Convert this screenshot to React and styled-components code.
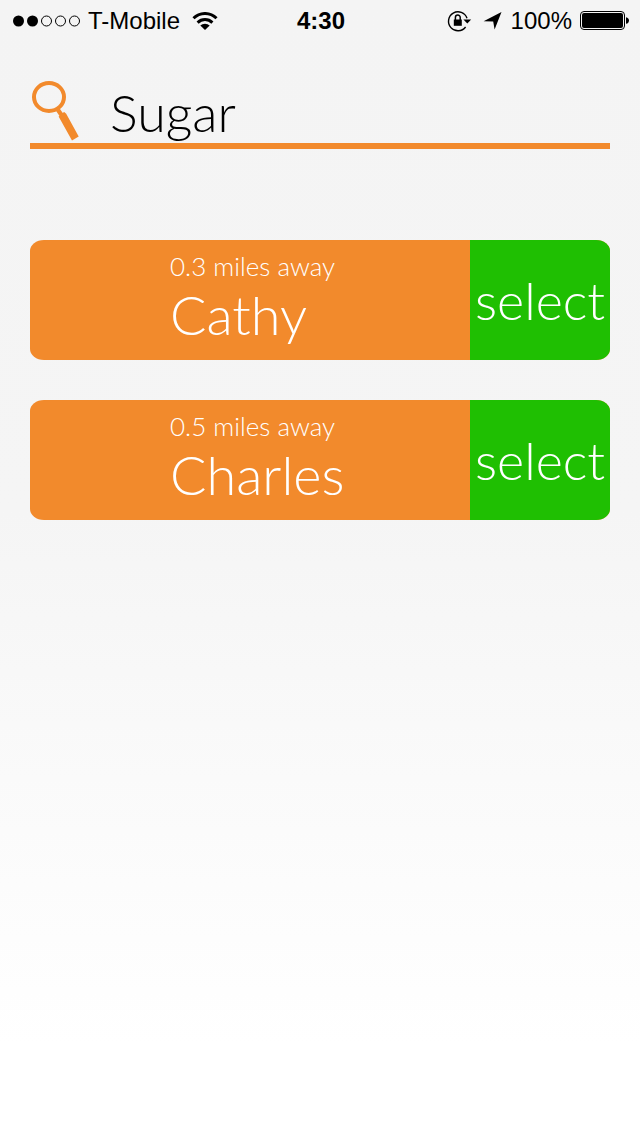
import { useState } from 'react';
import styled, { createGlobalStyle } from 'styled-components';

const orange = '#f28a2c';
const green = '#1fbf02';

const GlobalStyle = createGlobalStyle`
  * {
    box-sizing: border-box;
  }

  body {
    margin: 0;
    background: #ffffff;
  }
`;

const Screen = styled.div`
  min-height: 100vh;
  background: linear-gradient(#f4f4f4 0%, #f5f5f5 45%, #ffffff 92%);
  font-family: Lato, 'Open Sans', sans-serif;
  font-weight: 300;
`;

// Status bar
const StatusBar = styled.header`
  display: grid;
  grid-template-columns: 1fr auto 1fr;
  align-items: center;
  height: 40px;
  padding: 1px 11px 0 13px;
  color: #000000;
  font-family: 'Liberation Sans', Arial, sans-serif;
  font-size: 24px;
  font-weight: 400;
  line-height: 40px;
`;

const StatusGroup = styled.div`
  display: flex;
  align-items: center;
  justify-content: ${({ $end }) => ($end ? 'flex-end' : 'flex-start')};
  gap: 8px;
`;

const StatusIcons = styled.div`
  display: flex;
  align-items: center;
  gap: 11px;
`;

const Carrier = styled.span`
  margin-right: 4px;
`;

const Clock = styled.time`
  font-weight: 700;
`;

// Search
const SearchBar = styled.label`
  display: flex;
  align-items: center;
  height: 69px;
  margin: 40px 30px 0;
  border-bottom: 6px solid ${orange};
`;

const SearchInput = styled.input`
  flex: 1;
  min-width: 0;
  height: 63px;
  margin-left: 30px;
  padding: 0;
  border: 0;
  outline: 0;
  background: transparent;
  color: #000000;
  font-family: inherit;
  font-size: 52px;
  font-weight: 300;
`;

// Results
const ResultList = styled.ul`
  display: flex;
  flex-direction: column;
  gap: 40px;
  margin: 0;
  padding: 91px 30px 40px;
  list-style: none;
`;

const ResultCard = styled.li`
  display: flex;
  min-height: 120px;
  border-radius: 14px / 11px;
  overflow: hidden;
  background: ${orange};
  color: #ffffff;
`;

const Person = styled.div`
  flex: 1;
  min-width: 0;
  padding: 9px 0 0 140px;
`;

const Distance = styled.p`
  margin: 0;
  font-size: 26px;
  line-height: 34px;
`;

const Name = styled.h2`
  margin: 0;
  font-size: 54px;
  font-weight: 300;
  line-height: 64px;
`;

const SelectButton = styled.button`
  width: 140px;
  padding: 0;
  border: 0;
  background: ${green};
  color: #ffffff;
  font-family: inherit;
  font-size: 52px;
  font-weight: 300;
  line-height: 120px;
  cursor: pointer;
`;

const SignalIcon = () => (
  <svg width="67" height="12" viewBox="0 0 67 12" aria-hidden="true">
    <circle cx="5.5" cy="6" r="5.5" />
    <circle cx="19.5" cy="6" r="5.5" />
    <g fill="none" stroke="#000">
      <circle cx="33.5" cy="6" r="5" />
      <circle cx="47.5" cy="6" r="5" />
      <circle cx="61.5" cy="6" r="5" />
    </g>
  </svg>
);

const WifiIcon = () => (
  <svg width="26" height="18" viewBox="0 0 26 18" aria-hidden="true">
    <g fill="none" stroke="#000" strokeWidth="3">
      <path d="M1.5 6.2a16.4 16.4 0 0 1 23 0" />
      <path d="M5.6 10.6a10.6 10.6 0 0 1 14.8 0" />
    </g>
    <path d="M8.3 13.6a6.8 6.8 0 0 1 9.4 0L13 18z" />
  </svg>
);

const RotationLockIcon = () => (
  <svg width="25" height="22" viewBox="0 0 25 22" aria-hidden="true">
    <path d="M18.6 17A9.5 9.5 0 1 1 20 8.2" fill="none" stroke="#000" strokeWidth="1.4" />
    <path d="M16.4 9.4h7.8l-3.9 4.2z" />
    <path d="M6.8 9.5h8v6.3h-8z" />
    <path d="M8.4 10V7.4a2.4 2.4 0 0 1 4.8 0V10" fill="none" stroke="#000" strokeWidth="1.5" />
  </svg>
);

const LocationIcon = () => (
  <svg width="20" height="20" viewBox="0 0 20 20" aria-hidden="true">
    <path d="M18.5 1L11.6 18.6 10.2 10.6 .6 10.2z" />
  </svg>
);

const BatteryIcon = () => (
  <svg width="49" height="20" viewBox="0 0 49 20" aria-hidden="true">
    <rect x="0.5" y="0.5" width="44" height="18" rx="3.5" fill="none" stroke="#000" />
    <rect x="2" y="2" width="41" height="15" rx="2" />
    <path d="M46 6.2c4 .5 4 6.1 0 6.6z" />
  </svg>
);

const MagnifierIcon = () => (
  <svg width="50" height="62" viewBox="0 0 50 62" aria-hidden="true">
    <ellipse cx="19" cy="16" rx="15" ry="14" fill="none" stroke={orange} strokeWidth="4" />
    <path d="M27 27.5l5.5 8" stroke={orange} strokeWidth="4.4" />
    <path d="M28.6 35.6l1.2-.8.6-1.6 3.8-2.2 2 1.8L48.7 55.6 42 59.6z" fill={orange} />
  </svg>
);

const people = [
  { name: 'Cathy', miles: 0.3 },
  { name: 'Charles', miles: 0.5 },
];

const App = () => {
  const [query, setQuery] = useState('Sugar');

  return (
    <Screen>
      <GlobalStyle />

      <StatusBar>
        <StatusGroup>
          <SignalIcon />
          <Carrier>T-Mobile</Carrier>
          <WifiIcon />
        </StatusGroup>
        <Clock>4:30</Clock>
        <StatusGroup $end>
          <StatusIcons>
            <RotationLockIcon />
            <LocationIcon />
          </StatusIcons>
          <span>100%</span>
          <BatteryIcon />
        </StatusGroup>
      </StatusBar>

      <main>
        <SearchBar>
          <MagnifierIcon />
          <SearchInput
            type="text"
            aria-label="Search"
            value={query}
            onChange={(e) => setQuery(e.target.value)}
          />
        </SearchBar>

        <ResultList>
          {people.map(({ name, miles }) => (
            <ResultCard key={name}>
              <Person>
                <Distance>{miles} miles away</Distance>
                <Name>{name}</Name>
              </Person>
              <SelectButton type="button" aria-label={`select ${name}`}>
                select
              </SelectButton>
            </ResultCard>
          ))}
        </ResultList>
      </main>
    </Screen>
  );
};

export default App;
